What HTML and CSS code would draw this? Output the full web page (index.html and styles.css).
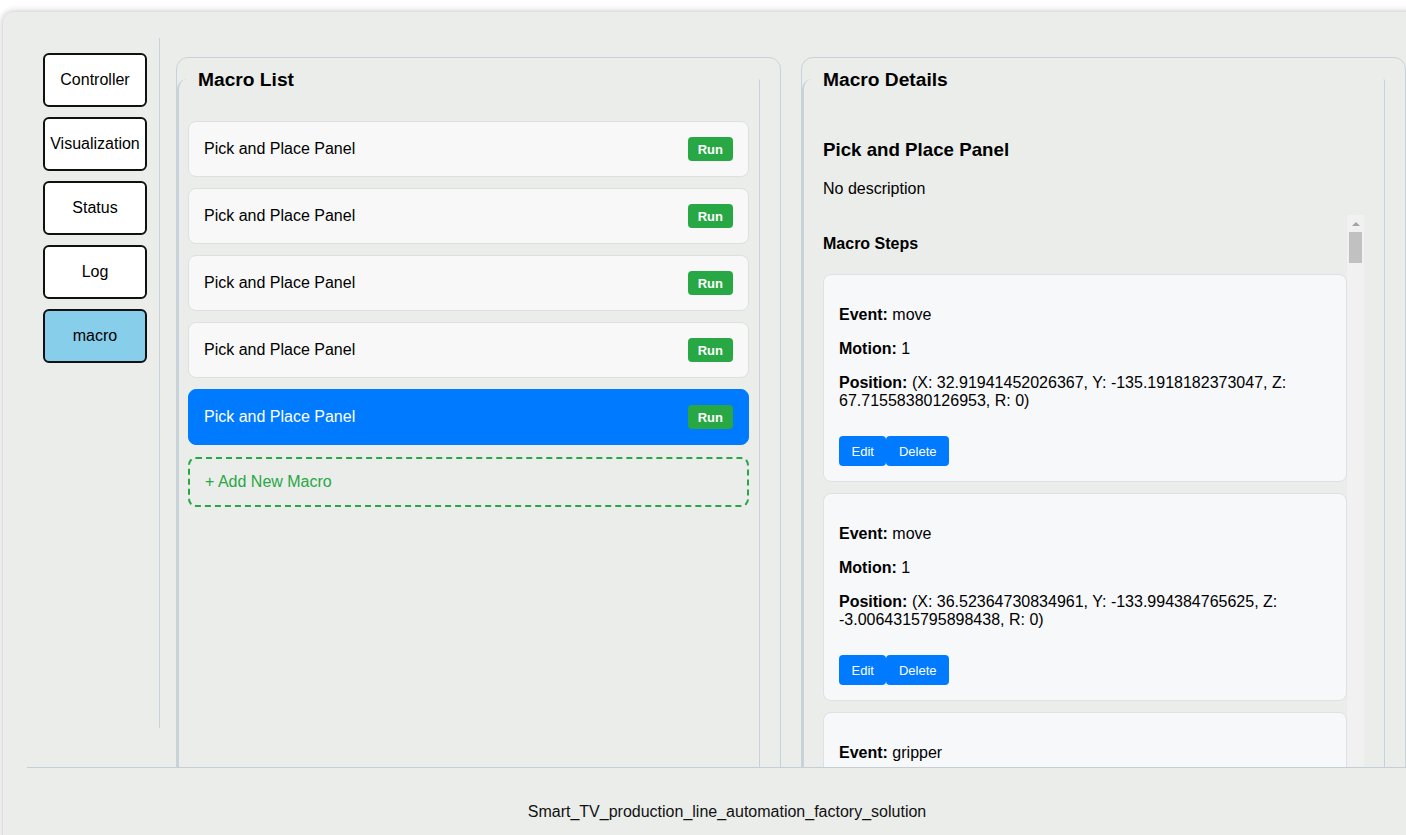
FILE: index.html
```html
<!DOCTYPE html>
<html lang="en">
<head>
<meta charset="utf-8">
<title>Macro</title>
<link rel="stylesheet" href="styles.css">
</head>
<body>
<div class="app">
  <div class="main">
    <nav class="sidebar">
      <button class="nav-btn">Controller</button>
      <button class="nav-btn">Visualization</button>
      <button class="nav-btn">Status</button>
      <button class="nav-btn">Log</button>
      <button class="nav-btn active">macro</button>
    </nav>
    <div class="panels">
      <section class="panel">
        <h2 class="panel-title">Macro List</h2>
        <div class="panel-body list-body">
          <div class="macro-item"><span>Pick and Place Panel</span><button class="run-btn">Run</button></div>
          <div class="macro-item"><span>Pick and Place Panel</span><button class="run-btn">Run</button></div>
          <div class="macro-item"><span>Pick and Place Panel</span><button class="run-btn">Run</button></div>
          <div class="macro-item"><span>Pick and Place Panel</span><button class="run-btn">Run</button></div>
          <div class="macro-item selected"><span>Pick and Place Panel</span><button class="run-btn">Run</button></div>
          <div class="add-macro">+ Add New Macro</div>
        </div>
      </section>
      <section class="panel">
        <h2 class="panel-title">Macro Details</h2>
        <div class="panel-body details-body">
          <h3 class="macro-name">Pick and Place Panel</h3>
          <p class="macro-desc">No description</p>
          <div class="steps-box">
            <div class="steps">
              <h4 class="steps-title">Macro Steps</h4>
              <div class="step-card">
                <p><b>Event:</b> move</p>
                <p><b>Motion:</b> 1</p>
                <p><b>Position:</b> (X: 32.91941452026367, Y: -135.1918182373047, Z: 67.71558380126953, R: 0)</p>
                <div class="step-actions"><button class="step-btn">Edit</button><button class="step-btn">Delete</button></div>
              </div>
              <div class="step-card">
                <p><b>Event:</b> move</p>
                <p><b>Motion:</b> 1</p>
                <p><b>Position:</b> (X: 36.52364730834961, Y: -133.994384765625, Z: -3.0064315795898438, R: 0)</p>
                <div class="step-actions"><button class="step-btn">Edit</button><button class="step-btn">Delete</button></div>
              </div>
              <div class="step-card">
                <p><b>Event:</b> gripper</p>
                <p><b>State:</b> close</p>
                <p><b>Delay:</b> 500 ms</p>
                <div class="step-actions"><button class="step-btn">Edit</button><button class="step-btn">Delete</button></div>
              </div>
            </div>
            <div class="scrollbar" aria-hidden="true"><span class="sb-arrow"></span><span class="sb-thumb"></span></div>
          </div>
        </div>
      </section>
    </div>
  </div>
  <footer class="footer">Smart_TV_production_line_automation_factory_solution</footer>
</div>
</body>
</html>
```

FILE: styles.css
```css
html, body {
  margin: 0;
  padding: 0;
  overflow: hidden;
  background: #ffffff;
  font-family: "Liberation Sans", Arial, sans-serif;
  color: #000;
}

.app {
  margin: 12px 0 0 3px;
  width: 1424px;
  background: #ebedea;
  border-radius: 10px 10px 0 0;
  box-shadow: 0 0 7px rgba(0, 0, 0, 0.28);
}

.main {
  display: flex;
  height: 755px;
  overflow: hidden;
}

.sidebar {
  display: flex;
  flex-direction: column;
  gap: 10px;
  margin-top: 26px;
  height: 675px;
  padding: 15px 12px 0 40px;
  border-right: 1px solid #c8d3d9;
  flex: none;
}

.nav-btn {
  width: 104px;
  height: 54px;
  padding: 0;
  background: #ffffff;
  border: 2px solid #111;
  border-radius: 6px;
  font-family: "Liberation Sans", Arial, sans-serif;
  font-size: 16px;
  color: #000;
}

.nav-btn.active {
  background: #87ceeb;
}

.panels {
  display: flex;
  gap: 20px;
  margin: 45px 0 0 16px;
}

.panel {
  width: 603px;
  height: 800px;
  border: 1px solid #c8d3d9;
  border-radius: 12px;
  flex: none;
}

.panel-title {
  margin: 0;
  padding: 11px 21px 0;
  font-size: 19.2px;
  font-weight: bold;
  line-height: 22px;
}

.panel-body {
  margin: -12px 20px 0 0;
  height: 760px;
  border-left: 2px solid #c8d3d9;
  border-right: 1px solid #c8d3d9;
  border-radius: 10px 2px 0 0;
}

.list-body {
  padding: 42px 10px 0 9px;
}

.macro-item {
  display: flex;
  align-items: center;
  justify-content: space-between;
  height: 54px;
  padding: 0 15px;
  margin-bottom: 11px;
  background: #f8f8f8;
  border: 1px solid #dedfdf;
  border-radius: 8px;
  font-size: 16px;
}

.macro-item.selected {
  background: #007bff;
  border-color: #007bff;
  color: #ffffff;
}

.run-btn {
  height: 24px;
  padding: 0 10px;
  background: #28a745;
  color: #ffffff;
  border: none;
  border-radius: 4px;
  font-family: "Liberation Sans", Arial, sans-serif;
  font-size: 13px;
  font-weight: bold;
}

.add-macro {
  margin-top: 12px;
  padding: 14px 15px;
  border: 2px dashed #28a745;
  border-radius: 8px;
  color: #28a745;
  font-size: 16px;
  line-height: 18px;
}

.details-body {
  padding: 43px 20px 0 19px;
}

.macro-name {
  margin: 17px 0 19px;
  font-size: 18.72px;
}

.macro-desc {
  margin: 0 0 17px;
  font-size: 16px;
}

.steps-box {
  position: relative;
  height: 600px;
  padding-right: 17px;
}

.steps {
  height: 100%;
  overflow: hidden;
}

.scrollbar {
  position: absolute;
  top: 0;
  right: 0;
  bottom: 0;
  width: 17px;
  background: #f1f1f1;
  display: flex;
  flex-direction: column;
  align-items: center;
}

.sb-arrow {
  width: 0;
  height: 0;
  margin: 7px 0 6px;
  border-left: 4px solid transparent;
  border-right: 4px solid transparent;
  border-bottom: 4px solid #a3a3a3;
}

.sb-thumb {
  width: 13px;
  height: 31px;
  background: #c1c1c1;
}

.steps-title {
  margin: 20px 0 21px;
  font-size: 16px;
}

.step-card {
  padding: 15px 15px;
  margin-bottom: 11px;
  background: #f7f8fa;
  border: 1px solid #dde1e5;
  border-radius: 8px;
  font-size: 16px;
}

.step-card p {
  margin: 16px 0;
}

.step-actions {
  display: flex;
  margin-top: 26px;
}

.step-btn {
  height: 30px;
  padding: 0 12.5px;
  background: #007bff;
  color: #ffffff;
  border: none;
  border-radius: 4px;
  font-family: "Liberation Sans", Arial, sans-serif;
  font-size: 13px;
}

.footer {
  margin-left: 24px;
  padding: 35px 0 40px;
  border-top: 1px solid #c5ced5;
  text-align: center;
  font-size: 16px;
  color: #111;
}
```
